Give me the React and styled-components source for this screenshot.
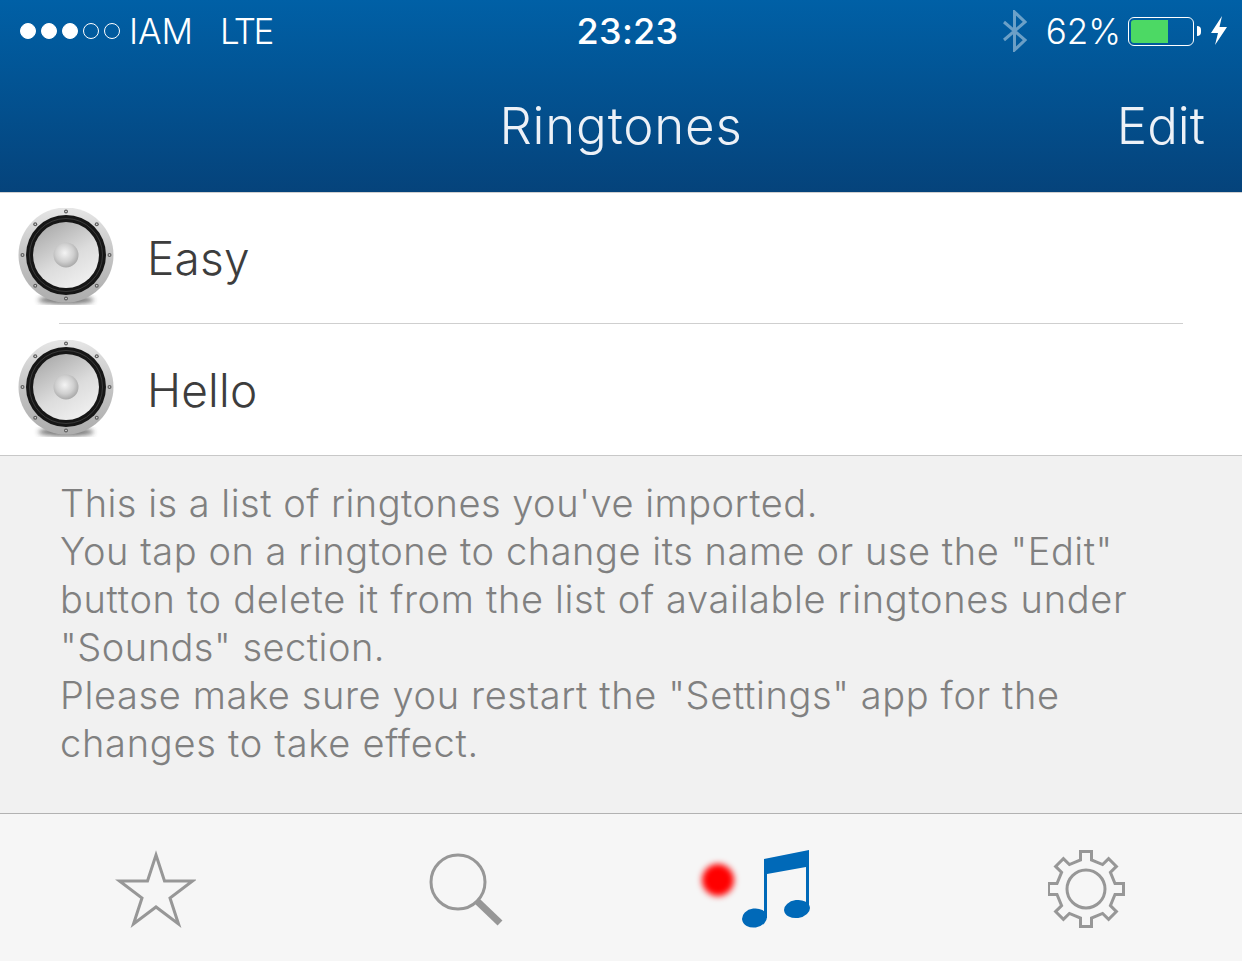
import styled, { createGlobalStyle } from "styled-components";

const GlobalStyle = createGlobalStyle`
  html, body {
    margin: 0;
    padding: 0;
    background: #f6f6f6;
  }
  body {
    font-family: Inter, "Noto Sans", "Liberation Sans", sans-serif;
  }
`;

const Screen = styled.div`
  width: 1242px;
  height: 961px;
  display: flex;
  flex-direction: column;
  overflow: hidden;
`;

const Header = styled.header`
  height: 192px;
  flex: none;
  background: linear-gradient(#0060a6, #05437b);
  color: #fff;
`;

const StatusBar = styled.div`
  height: 62px;
  display: grid;
  grid-template-columns: 1fr auto 1fr;
  align-items: center;
  padding: 0 15px 0 20px;
`;

const StatusLeft = styled.div`
  display: flex;
  align-items: center;
`;

const StatusRight = styled.div`
  display: flex;
  align-items: center;
  justify-content: flex-end;
`;

const SignalDot = styled.span`
  width: 16px;
  height: 16px;
  margin-right: 5px;
  border-radius: 50%;
  box-sizing: border-box;
  border: 1.5px solid #fff;
  background: ${(p) => (p.$on ? "#fff" : "transparent")};
`;

const StatusText = styled.span`
  font-size: 35px;
  font-weight: 300;
  letter-spacing: ${(p) => p.$track || 0}px;
  line-height: 62px;
  margin-left: ${(p) => p.$gap || 0}px;
`;

const Clock = styled.span`
  font-size: 36px;
  font-weight: 500;
  letter-spacing: 0.3px;
  margin-left: 8px;
`;

const Battery = styled.div`
  width: 66px;
  height: 29px;
  margin-left: 7px;
  padding: 2px;
  box-sizing: border-box;
  border: 1.5px solid #fff;
  border-radius: 6px;
`;

const BatteryFill = styled.div`
  height: 100%;
  background: #4cd964;
  border-radius: 3px 0 0 3px;
`;

const BatteryTip = styled.div`
  width: 4px;
  height: 10px;
  margin-left: 3px;
  background: #fff;
  border-radius: 0 5px 5px 0;
`;

const NavBar = styled.div`
  display: grid;
  grid-template-columns: 1fr auto 1fr;
  align-items: center;
  height: 130px;
  padding: 0 37px;
  margin-top: -2px;
  font-weight: 300;
  color: #edf1f7;
`;

const NavTitle = styled.div`
  font-size: 51px;
  letter-spacing: 0.8px;
`;

const EditButton = styled.div`
  font-size: 51px;
  justify-self: end;
`;

const List = styled.div`
  background: #fff;
  border-top: 1px solid #d0d0d0;
  border-bottom: 1px solid #c8c8c8;
  flex: none;
`;

const Row = styled.div`
  height: 130px;
  display: flex;
  align-items: center;
  padding-left: 18px;
  color: #3d3d3d;
  font-size: 46px;
  font-weight: 300;
  & + & {
    height: 131px;
    border-top: 1px solid #cfcfcf;
    border-image: linear-gradient(to right, transparent 60px, #cfcfcf 60px, #cfcfcf 1182px, transparent 1182px) 1;
  }
`;

const RowLabel = styled.span`
  margin-left: 33px;
  letter-spacing: 0.2px;
`;

const Notes = styled.div`
  flex: 1;
  background: #f1f1f1;
  padding: 23px 60px 0 60px;
  color: #808080;
  font-size: 38px;
  font-weight: 300;
  line-height: 48px;
`;

const NoteLine = styled.div`
  white-space: nowrap;
  letter-spacing: ${(p) => p.$track}px;
`;

const TabBar = styled.nav`
  flex: none;
  height: 148px;
  box-sizing: border-box;
  border-top: 1px solid #b2b2b2;
  background: #f6f6f6;
  display: grid;
  grid-template-columns: repeat(4, 1fr);
`;

const Tab = styled.div`
  position: relative;
  display: flex;
  justify-content: center;
  padding-top: 36px;
`;

const RedDot = styled.span`
  position: absolute;
  left: 81px;
  top: 50px;
  width: 32px;
  height: 32px;
  border-radius: 50%;
  background: #ff0000;
  filter: blur(3px);
`;

const notes = [
  ["This is a list of ringtones you've imported.", 0.49],
  ['You tap on a ringtone to change its name or use the "Edit"', 0.55],
  ["button to delete it from the list of available ringtones under", 0.66],
  ['"Sounds" section.', 0.5],
  ['Please make sure you restart the "Settings" app for the', 0.62],
  ["changes to take effect.", 0.73],
];

const speakerScrews = Array.from({ length: 8 }, (_, i) => {
  const a = (i * Math.PI) / 4;
  return [48 + 43.5 * Math.cos(a), 47 + 43.5 * Math.sin(a)];
});

const Speaker = () => (
  <svg width="96" height="100" viewBox="0 0 96 100">
    <defs>
      <linearGradient id="rim" x1="0" y1="0" x2="0" y2="1">
        <stop offset="0" stopColor="#e6e6e6" />
        <stop offset="0.5" stopColor="#c4c4c4" />
        <stop offset="1" stopColor="#adadad" />
      </linearGradient>
      <linearGradient id="cone" x1="0.2" y1="0" x2="0.8" y2="1">
        <stop offset="0" stopColor="#a9a9a9" />
        <stop offset="0.55" stopColor="#dcdcdc" />
        <stop offset="1" stopColor="#f2f2f2" />
      </linearGradient>
      <radialGradient id="dome" cx="0.45" cy="0.42" r="0.6">
        <stop offset="0" stopColor="#f4f4f4" />
        <stop offset="0.6" stopColor="#cfcfcf" />
        <stop offset="1" stopColor="#a6a6a6" />
      </radialGradient>
      <filter id="soft">
        <feGaussianBlur stdDeviation="2.5" />
      </filter>
    </defs>
    <ellipse cx="48" cy="92" rx="28" ry="4" fill="#333" opacity="0.7" filter="url(#soft)" />
    <circle cx="48" cy="47" r="47.5" fill="url(#rim)" />
    <circle cx="48" cy="47" r="40" fill="#161616" />
    <circle cx="48" cy="47" r="36.5" fill="none" stroke="#3a3a3a" strokeWidth="1" />
    <circle cx="48" cy="47" r="33" fill="url(#cone)" />
    <circle cx="48" cy="47" r="12.5" fill="url(#dome)" />
    {speakerScrews.map(([x, y], i) => (
      <g key={i}>
        <circle cx={x} cy={y} r="2" fill="#5e5e5e" />
        <circle cx={x} cy={y} r="0.8" fill="#eee" />
      </g>
    ))}
  </svg>
);

const gearPath = (() => {
  const cx = 38;
  const cy = 39;
  const pts = [];
  for (let i = 0; i < 8; i++) {
    const a = (i * Math.PI) / 4 - Math.PI / 2;
    const ux = Math.cos(a);
    const uy = Math.sin(a);
    const px = -uy;
    const py = ux;
    const at = (r, w) => [cx + ux * r + px * w, cy + uy * r + py * w];
    pts.push(at(29, -5.5), at(37.5, -5.5), at(37.5, 5.5), at(29, 5.5));
  }
  return "M" + pts.map((p) => p.map((n) => n.toFixed(1)).join(" ")).join("L") + "Z";
})();

const App = () => {
  return (
    <Screen>
      <GlobalStyle />
      <Header>
        <StatusBar>
          <StatusLeft>
            <SignalDot $on />
            <SignalDot $on />
            <SignalDot $on />
            <SignalDot />
            <SignalDot />
            <StatusText $gap={4} $track={-0.1}>IAM</StatusText>
            <StatusText $gap={27} $track={-2.5}>LTE</StatusText>
          </StatusLeft>
          <Clock>23:23</Clock>
          <StatusRight>
            <svg width="24" height="42" viewBox="0 0 24 42" style={{ marginRight: 19 }}>
              <path d="M1 12 L22 30 L11.5 40 L11.5 2 L22 12 L1 30" fill="none" stroke="#fff" strokeOpacity="0.42" strokeWidth="3" />
            </svg>
            <StatusText>62%</StatusText>
            <Battery>
              <BatteryFill style={{ width: "62%" }} />
            </Battery>
            <BatteryTip />
            <svg width="16" height="30" viewBox="0 0 16 30" style={{ marginLeft: 10 }}>
              <path d="M11 0 L0 17 L7 17 L4 29 L16 11 L8.5 11 Z" fill="#fff" />
            </svg>
          </StatusRight>
        </StatusBar>
        <NavBar>
          <span />
          <NavTitle>Ringtones</NavTitle>
          <EditButton>Edit</EditButton>
        </NavBar>
      </Header>
      <List>
        <Row>
          <Speaker />
          <RowLabel>Easy</RowLabel>
        </Row>
        <Row>
          <Speaker />
          <RowLabel>Hello</RowLabel>
        </Row>
      </List>
      <Notes>
        {notes.map(([text, track]) => (
          <NoteLine key={text} $track={track}>{text}</NoteLine>
        ))}
      </Notes>
      <TabBar>
        <Tab>
          <svg width="82" height="80" viewBox="0 0 82 80">
            <path d="M42 5 L50.5 31 L78.5 31 L56 48 L64.5 74 L42 57 L19.5 74 L28 48 L5.5 31 L33.5 31 Z" fill="none" stroke="#979797" strokeWidth="3" />
          </svg>
        </Tab>
        <Tab>
          <svg width="76" height="80" viewBox="0 0 76 80">
            <circle cx="30" cy="32" r="27" fill="none" stroke="#979797" strokeWidth="3" />
            <path d="M49 51 L72 73" stroke="#979797" strokeWidth="7" />
          </svg>
        </Tab>
        <Tab>
          <RedDot />
          <svg width="70" height="80" viewBox="0 0 70 80">
            <path d="M23 9 L68 0 L68 59 L65 59 L65 17 L26 24 L26 68 L23 68 Z" fill="#0069b8" />
            <ellipse cx="56" cy="59" rx="13" ry="9" transform="rotate(-8 56 59)" fill="#0069b8" />
            <ellipse cx="13.5" cy="68" rx="12.5" ry="9.5" transform="rotate(-8 13.5 68)" fill="#0069b8" />
          </svg>
        </Tab>
        <Tab>
          <svg width="78" height="80" viewBox="0 0 78 80">
            <path d={gearPath} fill="none" stroke="#979797" strokeWidth="3" />
            <circle cx="38" cy="39" r="19" fill="none" stroke="#979797" strokeWidth="3" />
          </svg>
        </Tab>
      </TabBar>
    </Screen>
  );
};

export default App;
